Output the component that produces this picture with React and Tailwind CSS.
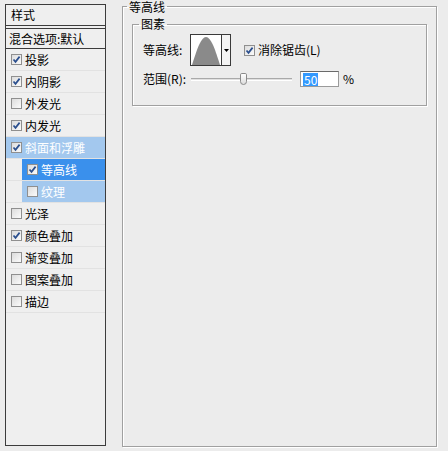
import React from 'react';

const font = { fontFamily: '"Noto Sans CJK SC", "Noto Sans", sans-serif' };

const CheckBox = ({ checked }) => (
  <span className="inline-flex w-[11px] h-[11px] shrink-0 items-center justify-center border border-[#8f8f8f] bg-gradient-to-br from-[#dcdcdc] to-[#fbfbfb]">
    {checked && (
      <svg width="9" height="9" viewBox="0 0 9 9">
        <path d="M1.5 4.5 L3.5 6.8 L7.6 1.6" fill="none" stroke="#2b4f8e" strokeWidth="1.7" />
      </svg>
    )}
  </span>
);

const styles = [
  { label: '投影', checked: true },
  { label: '内阴影', checked: true },
  { label: '外发光', checked: false },
  { label: '内发光', checked: true },
  { label: '斜面和浮雕', checked: true, tone: 'parent' },
  { label: '等高线', checked: true, tone: 'active', sub: true },
  { label: '纹理', checked: false, tone: 'light', sub: true },
  { label: '光泽', checked: false },
  { label: '颜色叠加', checked: true },
  { label: '渐变叠加', checked: false },
  { label: '图案叠加', checked: false },
  { label: '描边', checked: false },
];

const StyleRow = ({ item }) => {
  const bg =
    item.tone === 'active'
      ? 'bg-[#3a90ec] text-white'
      : item.tone === 'parent' || item.tone === 'light'
      ? 'bg-[#a3c8ee] text-white'
      : 'text-black';
  return (
    <div className="flex h-[22px] border-b border-[#e2e2e2]">
      {item.sub && <div className="w-[16px] shrink-0" />}
      <div className={`flex flex-1 items-center gap-[3px] pl-[5px] ${bg}`}>
        <CheckBox checked={item.checked} />
        <span className="text-[12px] leading-none">{item.label}</span>
      </div>
    </div>
  );
};

const ContourPreview = () => (
  <div className="flex h-[32px] border border-[#3a3a3a] bg-white">
    <svg width="30" height="30" viewBox="0 0 30 30" className="block">
      <path d="M1 30 C6 14 10 2 15 2 C20 2 24 14 29 30 Z" fill="#8a8a8a" />
    </svg>
    <div className="flex w-[9px] items-center justify-center border-l border-[#3a3a3a] bg-[#f4f4f4]">
      <svg width="5" height="3" viewBox="0 0 5 3">
        <path d="M0 0 H5 L2.5 3 Z" fill="#000" />
      </svg>
    </div>
  </div>
);

const Slider = () => (
  <div className="flex w-[101px] items-center">
    <div className="h-[3px] w-[49px] border-t border-b border-t-[#a9a9a9] border-b-white bg-[#e0e0e0]" />
    <div className="h-[12px] w-[7px] rounded-b-[4px] rounded-t-[2px] border border-[#8a8a8a] bg-gradient-to-b from-white to-[#dcdcdc]" />
    <div className="h-[3px] flex-1 border-t border-b border-t-[#a9a9a9] border-b-white bg-[#e0e0e0]" />
  </div>
);

export default function App() {
  return (
    <div className="flex h-[451px] w-[448px] bg-[#ececec] text-black" style={font}>
      {/* left list of layer styles */}
      <div className="ml-[5px] mt-[4px] flex h-[442px] w-[101px] flex-col border border-[#3c3c3c] bg-[#efefef]">
        <div className="flex h-[21px] items-center border-b border-[#3c3c3c] pl-[5px] text-[12px] leading-none">样式</div>
        <div className="h-[2px]" />
        <div className="flex h-[21px] items-center border-t border-b border-[#3c3c3c] pl-[3px] text-[12px] leading-none">
          混合选项:默认
        </div>
        {styles.map((item) => (
          <StyleRow key={item.label} item={item} />
        ))}
      </div>

      {/* right settings panel */}
      <fieldset className="ml-[16px] h-[447px] w-[315px] border border-[#a0a0a0] shadow-[inset_1px_1px_0_#fff,1px_1px_0_#fff] pl-[9px] pr-[9px]">
        <legend className="-ml-[5px] px-[2px] text-[12px] leading-[13px]">等高线</legend>
        <fieldset className="mt-[5px] h-[88px] border border-[#a0a0a0] shadow-[inset_1px_1px_0_#fff,1px_1px_0_#fff] pl-[10px]">
          <legend className="-ml-[4px] px-[2px] text-[12px] leading-[12px]">图素</legend>
          <div className="mt-[4px] flex items-center">
            <span className="w-[47px] text-[12px] leading-none">等高线:</span>
            <ContourPreview />
            <div className="ml-[13px] flex items-center gap-[3px]">
              <CheckBox checked />
              <span className="text-[12px] leading-none">消除锯齿(L)</span>
            </div>
          </div>
          <div className="mt-[5px] flex items-center">
            <span className="w-[48px] text-[12px] leading-none">范围(R):</span>
            <Slider />
            <div className="ml-[8px] flex h-[16px] w-[39px] items-center border border-[#9a9a9a] border-t-[#6a6a6a] bg-white pl-[2px]">
              <span className="bg-[#3399ff] px-[1px] text-[12px] leading-[13px] text-white">50</span>
            </div>
            <span className="ml-[4px] text-[12px] leading-none">%</span>
          </div>
        </fieldset>
      </fieldset>
    </div>
  );
}
